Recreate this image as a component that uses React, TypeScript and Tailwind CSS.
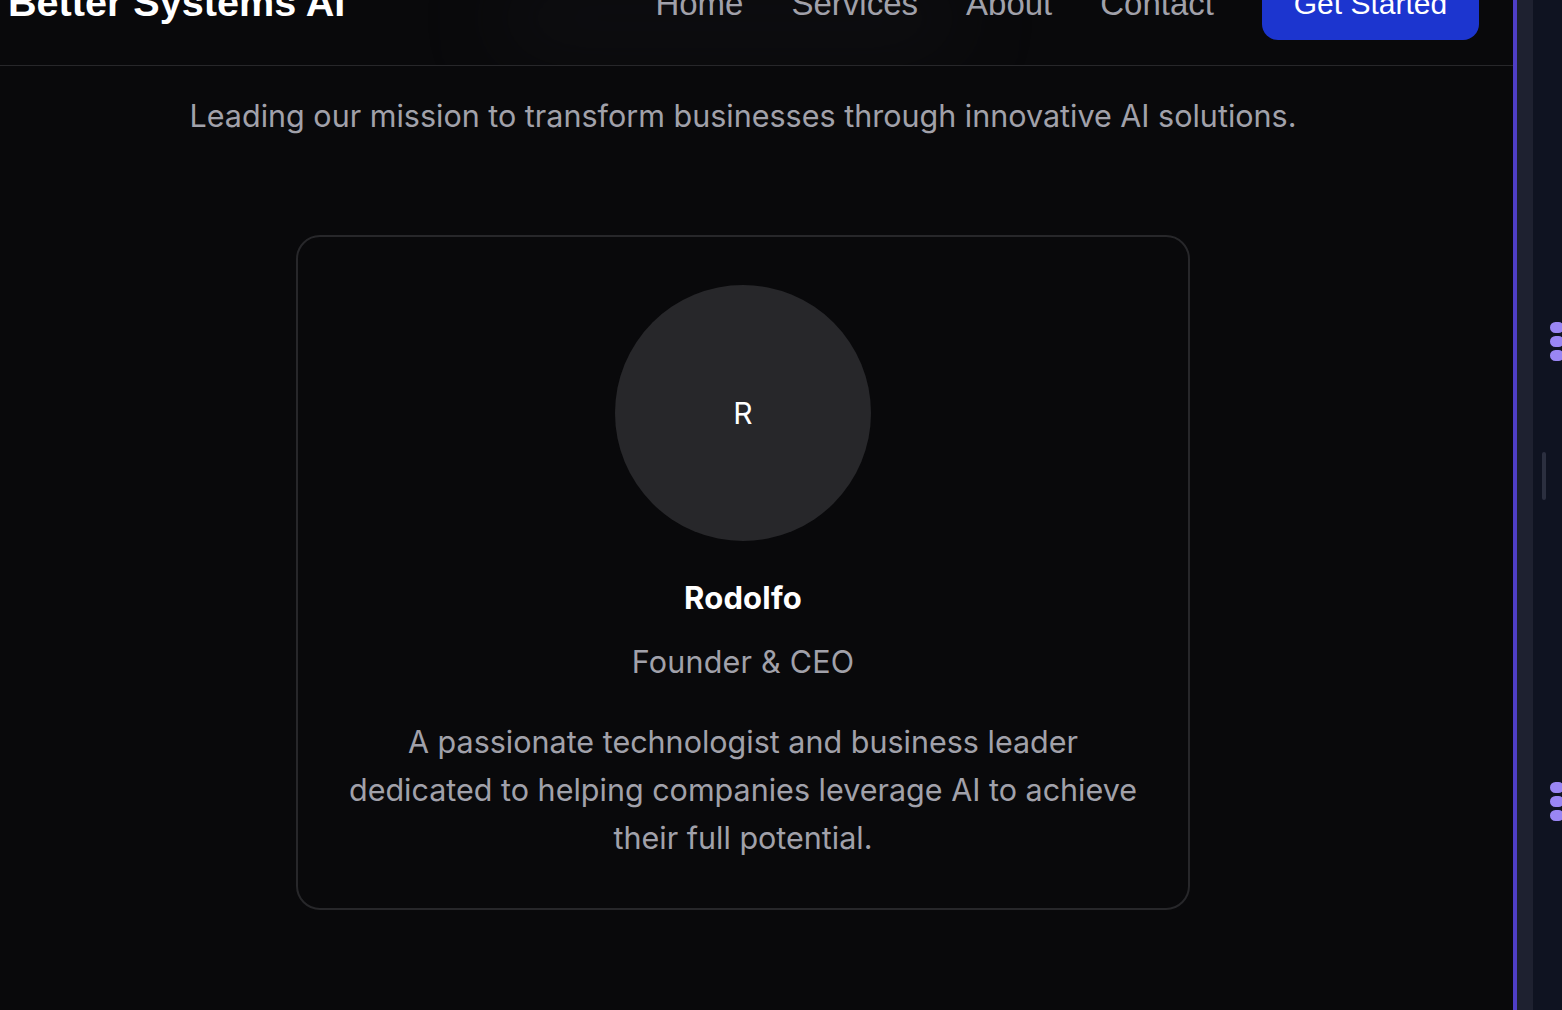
import React from "react";

const navLinks = ["Home", "Services", "About", "Contact"];

function Header() {
  return (
    <header className="h-[66px] overflow-hidden border-b border-[#27272a]">
      <div className="relative -mt-[32px] flex h-[70px] items-center justify-between pl-[8px] pr-[34px]">
        <div className="pointer-events-none absolute left-[500px] top-[20px] h-[60px] w-[460px] rounded-full bg-[#1a1a1d] opacity-40 blur-2xl" />
        <span className="relative font-['Liberation_Sans',Arial,sans-serif] text-[39.6px] font-bold leading-none text-white">
          Better Systems AI
        </span>
        <nav className="relative flex items-center gap-[48px] font-['Liberation_Sans',Arial,sans-serif]">
          {navLinks.map((link) => (
            <a key={link} href="#" className="text-[33px] leading-none text-[#a1a1aa]">
              {link}
            </a>
          ))}
          <button
            type="button"
            className="h-[74px] w-[217px] rounded-[16px] bg-[#1c35cf] text-[30px] font-medium text-white"
          >
            Get Started
          </button>
        </nav>
      </div>
    </header>
  );
}

function FounderCard() {
  return (
    <div className="mx-auto mt-[101px] flex w-[894px] flex-col items-center rounded-[24px] border-2 border-[#27272a] px-[46px] pb-[46px] pt-[48px] text-center">
      <div className="flex h-[256px] w-[256px] items-center justify-center rounded-full bg-[#27272a] text-[30px] text-white">
        R
      </div>
      <h3 className="mt-[39px] text-[31px] font-bold leading-[36px] tracking-[0.2px] text-white">Rodolfo</h3>
      <p className="mt-[28px] text-[30.5px] leading-[36px] tracking-[0.2px] text-[#a1a1aa]">Founder &amp; CEO</p>
      <p className="mt-[38px] text-[30.5px] leading-[48px] text-[#a1a1aa]">
        A passionate technologist and business leader dedicated to helping companies leverage AI to achieve
        their full potential.
      </p>
    </div>
  );
}

function SidePanel() {
  return (
    <div className="flex h-full shrink-0">
      <div className="w-[4px] bg-[#4f3ec6]" />
      <div className="w-[16px] bg-[#1e2130]" />
      <div className="relative w-[29px] bg-[#0f1321]">
        {[322, 782].map((top) => (
          <div key={top} className="absolute left-[17px] flex flex-col gap-[3px]" style={{ top }}>
            <span className="h-[11px] w-[14px] rounded-full bg-[#9a86f4]" />
            <span className="h-[11px] w-[14px] rounded-full bg-[#9a86f4]" />
            <span className="h-[11px] w-[14px] rounded-full bg-[#9a86f4]" />
          </div>
        ))}
        <div className="absolute left-[9px] top-[452px] h-[48px] w-[4px] rounded-full bg-[#2b2f3f]" />
      </div>
    </div>
  );
}

export default function App() {
  return (
    <div className="flex h-[1010px] w-[1562px] overflow-hidden bg-[#09090b] font-['Inter',sans-serif]">
      <main className="flex min-w-0 flex-1 flex-col">
        <Header />
        <div className="pr-[27px]">
          <p className="mt-[32px] text-center text-[30.5px] leading-[36px] text-[#a1a1aa]">
            Leading our mission to transform businesses through innovative AI solutions.
          </p>
          <FounderCard />
        </div>
      </main>
      <SidePanel />
    </div>
  );
}
